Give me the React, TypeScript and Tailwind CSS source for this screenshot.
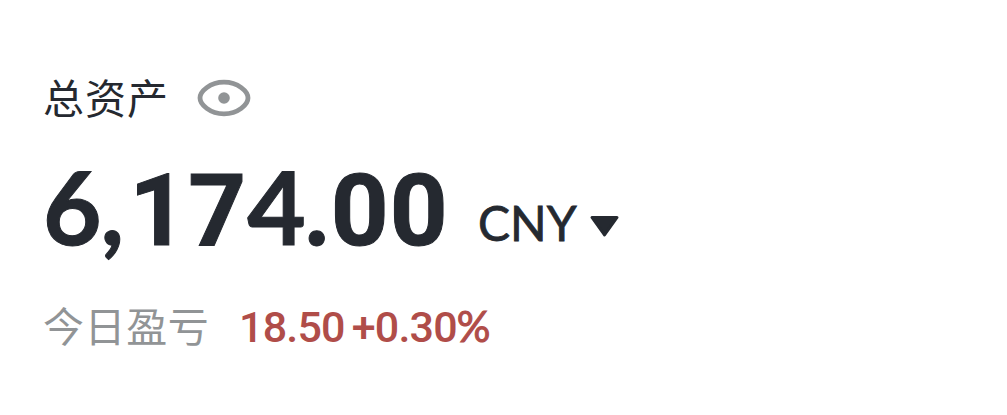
function EyeIcon() {
  return (
    <svg className="w-[54px] h-[40px]" viewBox="0 0 54 40" fill="none">
      <path
        d="M3 20C3 13.500 13 4.200 27 4.200S51 13.500 51 20S41 35.800 27 35.800S3 26.500 3 20Z"
        stroke="#919496"
        strokeWidth="4.800"
      />
      <circle cx="27" cy="20" r="5.800" fill="#919496" />
    </svg>
  );
}

export default function App() {
  return (
    <div className="w-[1007px] h-[415px] bg-white overflow-hidden pl-[43px] pt-[68px] whitespace-nowrap text-[#252930]">
      <div className="flex items-center h-[60px]">
        <span className="w-[154px] text-[41px] leading-[60px] tracking-[1px] -mt-[5px] font-['Noto_Sans_CJK_SC',sans-serif]">总资产</span>
        <EyeIcon />
      </div>
      <div className="flex items-baseline h-[120px] mt-[18px]">
        <span className="w-[435px] text-[101px] leading-[120px] font-bold font-['Lato',sans-serif] [-webkit-text-stroke:1px_#252930]">
          <span className="tracking-[-1px]">6,</span>
          <span className="ml-[6px] font-['Roboto',sans-serif] tracking-[1px]">17</span>4
          <span className="-ml-[1px]">.</span>
          <span className="ml-[2px] font-['Roboto',sans-serif] tracking-[1px]">00</span>
        </span>
        <div className="flex items-baseline -translate-y-[4px]">
          <span className="text-[48px] font-['Lato',sans-serif] [-webkit-text-stroke:0.8px_#252930]">CNY</span>
          <svg className="w-[30px] h-[24px] ml-[12px] translate-y-[-2px]" viewBox="0 0 30 24">
            <path d="M3 2.500H28L15.500 20Z" fill="#252930" stroke="#252930" strokeWidth="3" strokeLinejoin="round" />
          </svg>
        </div>
      </div>
      <div className="flex items-center h-[60px] mt-[32px]">
        <span className="w-[196px] text-[41px] leading-[60px] tracking-[0.6px] -mt-[9px] text-[#919496] font-['Noto_Sans_CJK_SC',sans-serif]">今日盈亏</span>
        <span className="-mt-[4px] text-[43px] leading-[60px] font-medium tracking-[-0.8px] text-[#b04d49] font-['Roboto',sans-serif]">
          18.50<span className="ml-[7px]">+0.30</span>
          <span className="font-normal font-['Lato',sans-serif] text-[42px] [-webkit-text-stroke:1px_#b04d49]">%</span>
        </span>
      </div>
    </div>
  );
}
